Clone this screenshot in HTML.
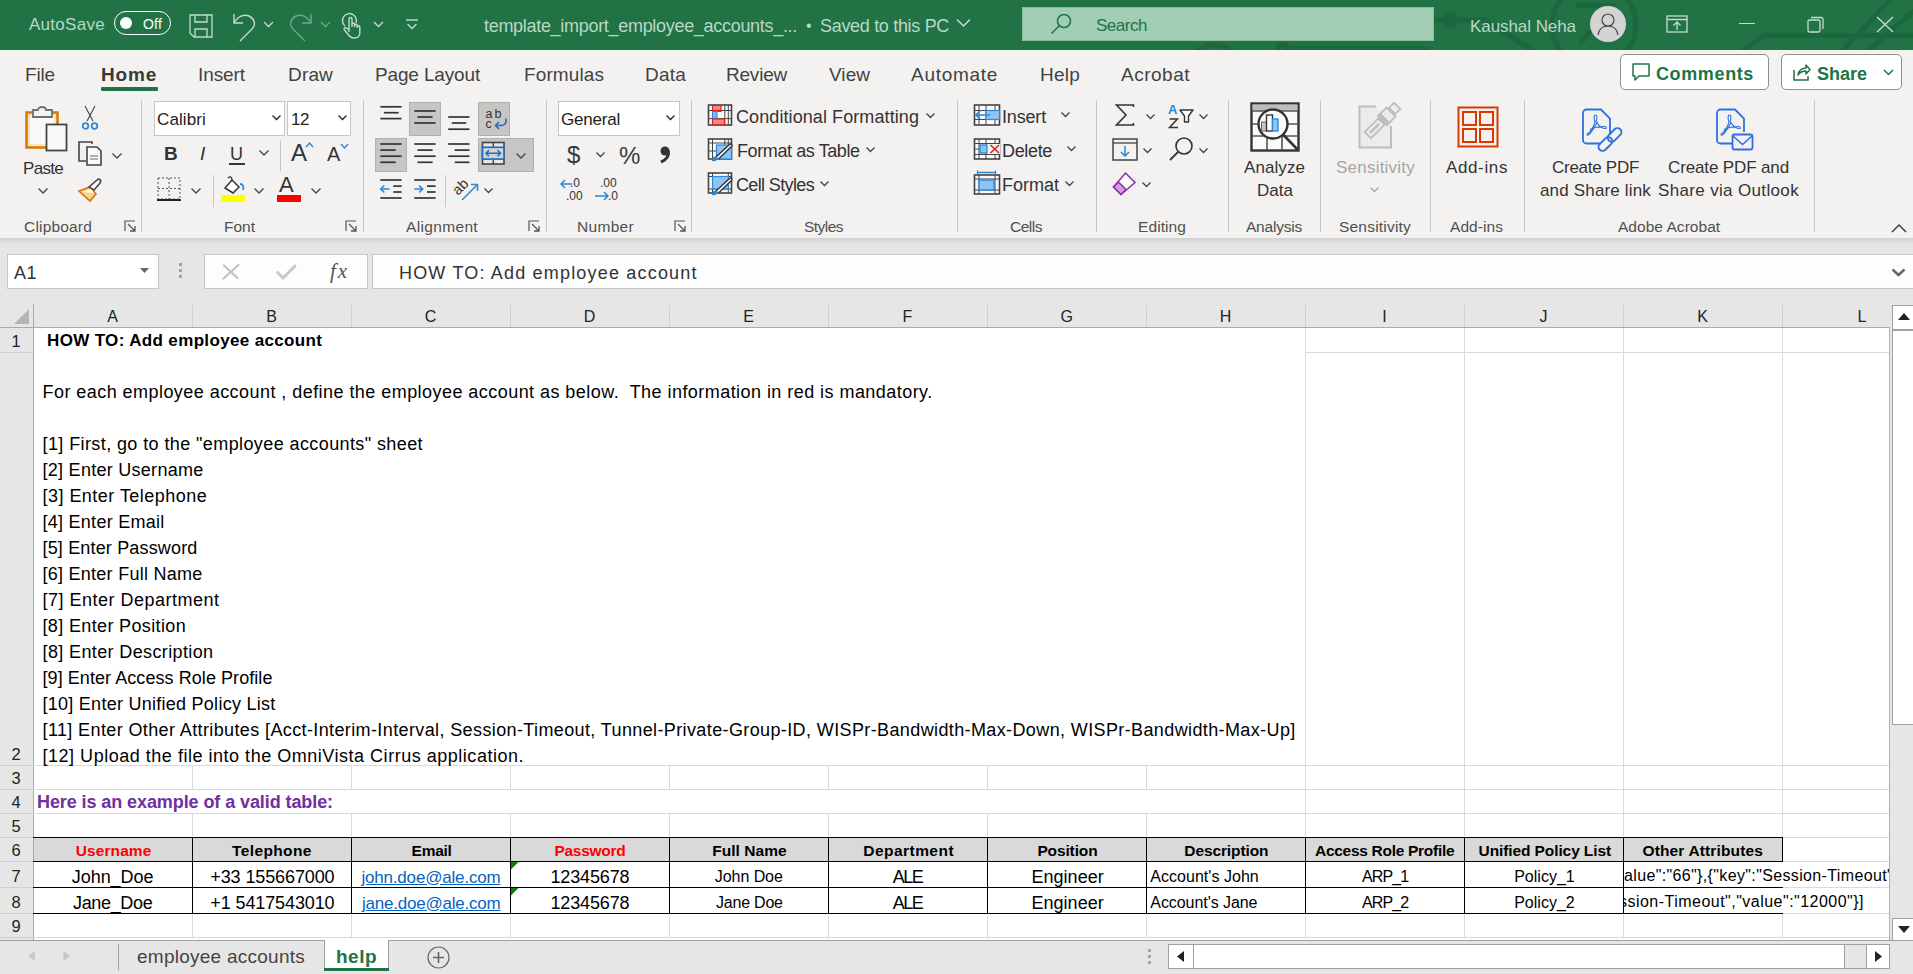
<!DOCTYPE html><html><head><meta charset="utf-8"><style>html,body{margin:0;padding:0}body{width:1913px;height:974px;position:relative;overflow:hidden;background:#fff}body div,body svg{position:absolute;box-sizing:border-box}svg{overflow:visible}</style></head><body><div style="left:0px;top:0px;width:1913px;height:50px;background:#217346"></div>
<div style="left:29px;top:15.61px;font:normal 17px/17px 'Liberation Sans', sans-serif;color:#b9d8c5;letter-spacing:0.285px;white-space:pre;">AutoSave</div>
<div style="left:114px;top:11px;width:57px;height:24px;border:1.5px solid #fff;border-radius:12px"></div>
<div style="left:120px;top:17px;width:12px;height:12px;background:#fff;border-radius:6px"></div>
<div style="left:143px;top:17.15px;font:normal 14px/14px 'Liberation Sans', sans-serif;color:#fff;letter-spacing:0.195px;white-space:pre;">Off</div>
<svg style="left:189px;top:14px" width="25" height="24" viewBox="0 0 25 24"><path d="M1 1H23V23H5L1 19Z M6 1V8H18V1 M6 23V15H18V23" fill="none" stroke="#c3dccd" stroke-width="1.3"/></svg>
<svg style="left:232px;top:13px" width="24" height="26" viewBox="0 0 24 26"><path d="M2 1V10H11" fill="none" stroke="#c3dccd" stroke-width="1.4"/><path d="M2 10C6 3 12 1 17 3C23 6 24 12 20 16L8 28" fill="none" stroke="#c3dccd" stroke-width="1.4"/></svg>
<svg style="left:263px;top:21px" width="11" height="7" viewBox="0 0 11 7"><path d="M1 1L5.5 5.5L10 1" fill="none" stroke="#c3dccd" stroke-width="1.3"/></svg>
<svg style="left:289px;top:13px" width="24" height="26" viewBox="0 0 24 26"><path d="M22 1V10H13" fill="none" stroke="#6fa88a" stroke-width="1.4"/><path d="M22 10C18 3 12 1 7 3C1 6 0 12 4 16L16 28" fill="none" stroke="#6fa88a" stroke-width="1.4"/></svg>
<svg style="left:320px;top:21px" width="11" height="7" viewBox="0 0 11 7"><path d="M1 1L5.5 5.5L10 1" fill="none" stroke="#6fa88a" stroke-width="1.3"/></svg>
<svg style="left:341px;top:13px" width="20" height="26" viewBox="0 0 20 26"><path d="M4 13A7 7 0 1 1 15 10" fill="none" stroke="#c3dccd" stroke-width="1.4"/><path d="M8 19V6A1.5 1.5 0 0 1 11 6V14M11 13V11.5A1.3 1.3 0 0 1 13.6 11.5V14M13.6 12.5A1.3 1.3 0 0 1 16.2 12.5V15M16.2 14A1.3 1.3 0 0 1 18.8 14V20C18.8 24 16 25 13 25C10 25 8 23 6 20L3.5 17A1.4 1.4 0 0 1 5.5 15L8 17" fill="none" stroke="#c3dccd" stroke-width="1.4"/></svg>
<svg style="left:373px;top:21px" width="11" height="7" viewBox="0 0 11 7"><path d="M1 1L5.5 5.5L10 1" fill="none" stroke="#c3dccd" stroke-width="1.3"/></svg>
<svg style="left:406px;top:19px" width="12" height="11" viewBox="0 0 12 11"><path d="M0 1H12" stroke="#c3dccd" stroke-width="1.4"/><path d="M1.5 5L6 9.5L10.5 5" fill="none" stroke="#c3dccd" stroke-width="1.4"/></svg>
<div style="left:484px;top:16.76px;font:normal 18px/18px 'Liberation Sans', sans-serif;color:#b9d8c5;letter-spacing:-0.302px;white-space:pre;">template_import_employee_accounts_...</div>
<div style="left:806px;top:18.46px;font:normal 16px/16px 'Liberation Sans', sans-serif;color:#b9d8c5;letter-spacing:0.398px;white-space:pre;">•</div>
<div style="left:820px;top:16.76px;font:normal 18px/18px 'Liberation Sans', sans-serif;color:#b9d8c5;letter-spacing:-0.317px;white-space:pre;">Saved to this PC</div>
<svg style="left:956px;top:18px" width="15" height="10" viewBox="0 0 15 10"><path d="M1 1.5L7.5 8L14 1.5" fill="none" stroke="#c3dccd" stroke-width="1.5"/></svg>
<svg style="left:0px;top:0px" width="1913" height="50" viewBox="0 0 1913 50"><g fill="none" stroke="#1d673e" stroke-width="5"><circle cx="1594" cy="25" r="42"/><path d="M1576 5.5H1612L1580 44"/><path d="M1434 20H1485L1535 52"/><circle cx="1450" cy="20" r="5.5"/><circle cx="1214" cy="72" r="27"/><circle cx="1283" cy="49" r="5"/><path d="M1283 49H1430"/><path d="M1742 52L1763 35.5H1913"/><path d="M1841 52L1892 -2"/><path d="M1867 52L1915 10"/></g></svg>
<div style="left:1022px;top:7px;width:412px;height:34px;background:#a0cdb4;border:1px solid #88bb9e"></div>
<svg style="left:1050px;top:13px" width="23" height="22" viewBox="0 0 23 22"><circle cx="14" cy="8" r="6.5" fill="none" stroke="#217346" stroke-width="1.5"/><path d="M9.5 12.5L1.5 20.5" stroke="#217346" stroke-width="1.5"/></svg>
<div style="left:1096px;top:16.61px;font:normal 17px/17px 'Liberation Sans', sans-serif;color:#217346;letter-spacing:-0.477px;white-space:pre;">Search</div>
<div style="left:1470px;top:17.61px;font:normal 17px/17px 'Liberation Sans', sans-serif;color:#b9d8c5;letter-spacing:-0.066px;white-space:pre;">Kaushal Neha</div>
<div style="left:1590px;top:6px;width:36px;height:36px;background:#d4d4d4;border-radius:18px"></div>
<svg style="left:1590px;top:6px" width="36" height="36" viewBox="0 0 36 36"><circle cx="18" cy="14" r="6" fill="none" stroke="#444" stroke-width="1.2"/><path d="M8 29C9 22 13 20 18 20C23 20 27 22 28 29" fill="none" stroke="#444" stroke-width="1.2"/></svg>
<svg style="left:1666px;top:15px" width="22" height="18" viewBox="0 0 22 18"><rect x="1" y="1" width="20" height="16" fill="none" stroke="#c3dccd" stroke-width="1.3"/><path d="M1 4.5H21M11 15V7M7.5 10.5L11 7L14.5 10.5" fill="none" stroke="#c3dccd" stroke-width="1.3"/></svg>
<div style="left:1739px;top:23px;width:16px;height:1px;background:#c3dccd"></div>
<svg style="left:1807px;top:16px" width="18" height="17" viewBox="0 0 18 17"><rect x="1" y="4" width="12" height="12" rx="1.5" fill="none" stroke="#c3dccd" stroke-width="1.3"/><path d="M4 1.5H14A2 2 0 0 1 16 3.5V13" fill="none" stroke="#c3dccd" stroke-width="1.3"/></svg>
<svg style="left:1876px;top:16px" width="18" height="17" viewBox="0 0 18 17"><path d="M1 1L17 16M17 1L1 16" stroke="#c3dccd" stroke-width="1.4"/></svg>
<div style="left:0px;top:50px;width:1913px;height:188px;background:#f3f2f1"></div>
<div style="left:0px;top:238px;width:1913px;height:6px;background:linear-gradient(#d0d0d0,#e6e6e6)"></div>
<div style="left:25px;top:64.92px;font:normal 19px/19px 'Liberation Sans', sans-serif;color:#424242;letter-spacing:-0.154px;white-space:pre;">File</div>
<div style="left:101px;top:64.92px;font:bold 19px/19px 'Liberation Sans', sans-serif;color:#3a3a3a;letter-spacing:0.803px;white-space:pre;">Home</div>
<div style="left:198px;top:64.92px;font:normal 19px/19px 'Liberation Sans', sans-serif;color:#424242;letter-spacing:-0.086px;white-space:pre;">Insert</div>
<div style="left:288px;top:64.92px;font:normal 19px/19px 'Liberation Sans', sans-serif;color:#424242;letter-spacing:0.166px;white-space:pre;">Draw</div>
<div style="left:375px;top:64.92px;font:normal 19px/19px 'Liberation Sans', sans-serif;color:#424242;letter-spacing:-0.154px;white-space:pre;">Page Layout</div>
<div style="left:524px;top:64.92px;font:normal 19px/19px 'Liberation Sans', sans-serif;color:#424242;letter-spacing:0.102px;white-space:pre;">Formulas</div>
<div style="left:645px;top:64.92px;font:normal 19px/19px 'Liberation Sans', sans-serif;color:#424242;letter-spacing:0.217px;white-space:pre;">Data</div>
<div style="left:726px;top:64.92px;font:normal 19px/19px 'Liberation Sans', sans-serif;color:#424242;letter-spacing:-0.216px;white-space:pre;">Review</div>
<div style="left:829px;top:64.92px;font:normal 19px/19px 'Liberation Sans', sans-serif;color:#424242;letter-spacing:0.040px;white-space:pre;">View</div>
<div style="left:911px;top:64.92px;font:normal 19px/19px 'Liberation Sans', sans-serif;color:#424242;letter-spacing:0.709px;white-space:pre;">Automate</div>
<div style="left:1040px;top:64.92px;font:normal 19px/19px 'Liberation Sans', sans-serif;color:#424242;letter-spacing:0.231px;white-space:pre;">Help</div>
<div style="left:1121px;top:64.92px;font:normal 19px/19px 'Liberation Sans', sans-serif;color:#424242;letter-spacing:0.503px;white-space:pre;">Acrobat</div>
<div style="left:101px;top:87px;width:57px;height:4px;background:#217346;border-radius:1px"></div>
<div style="left:1620px;top:54px;width:149px;height:36px;background:#fff;border:1px solid #8f8f8f;border-radius:5px"></div>
<svg style="left:1631px;top:62px" width="20" height="20" viewBox="0 0 20 20"><path d="M2 2H18V14H8L4 18V14H2Z" fill="none" stroke="#217346" stroke-width="1.5" stroke-linejoin="round"/></svg>
<div style="left:1656px;top:64.76px;font:bold 18px/18px 'Liberation Sans', sans-serif;color:#217346;letter-spacing:0.623px;white-space:pre;">Comments</div>
<div style="left:1781px;top:54px;width:121px;height:36px;background:#fff;border:1px solid #8f8f8f;border-radius:5px"></div>
<svg style="left:1791px;top:62px" width="20" height="20" viewBox="0 0 20 20"><path d="M3 8V18H17V14" fill="none" stroke="#217346" stroke-width="1.5"/><path d="M7 13C8 8 11 6 15 6V3L19 7.5L15 12V9C11 9 9 10 7 13Z" fill="none" stroke="#217346" stroke-width="1.5" stroke-linejoin="round"/></svg>
<div style="left:1817px;top:64.76px;font:bold 18px/18px 'Liberation Sans', sans-serif;color:#217346;letter-spacing:-0.005px;white-space:pre;">Share</div>
<svg style="left:1883px;top:69px" width="11" height="7" viewBox="0 0 11 7"><path d="M1 1L5.5 5.5L10 1" fill="none" stroke="#217346" stroke-width="1.5"/></svg>
<div style="left:141px;top:100px;width:1px;height:132px;background:#c8c6c4"></div>
<div style="left:363px;top:100px;width:1px;height:132px;background:#c8c6c4"></div>
<div style="left:546px;top:100px;width:1px;height:132px;background:#c8c6c4"></div>
<div style="left:691px;top:100px;width:1px;height:132px;background:#c8c6c4"></div>
<div style="left:957px;top:100px;width:1px;height:132px;background:#c8c6c4"></div>
<div style="left:1096px;top:100px;width:1px;height:132px;background:#c8c6c4"></div>
<div style="left:1228px;top:100px;width:1px;height:132px;background:#c8c6c4"></div>
<div style="left:1320px;top:100px;width:1px;height:132px;background:#c8c6c4"></div>
<div style="left:1430px;top:100px;width:1px;height:132px;background:#c8c6c4"></div>
<div style="left:1524px;top:100px;width:1px;height:132px;background:#c8c6c4"></div>
<div style="left:1814px;top:100px;width:1px;height:132px;background:#c8c6c4"></div>
<div style="left:24px;top:218.88px;font:normal 15.5px/15.5px 'Liberation Sans', sans-serif;color:#505050;letter-spacing:0.184px;white-space:pre;">Clipboard</div>
<div style="left:224px;top:218.88px;font:normal 15.5px/15.5px 'Liberation Sans', sans-serif;color:#505050;letter-spacing:-0.004px;white-space:pre;">Font</div>
<div style="left:406px;top:218.88px;font:normal 15.5px/15.5px 'Liberation Sans', sans-serif;color:#505050;letter-spacing:0.342px;white-space:pre;">Alignment</div>
<div style="left:577px;top:218.88px;font:normal 15.5px/15.5px 'Liberation Sans', sans-serif;color:#505050;letter-spacing:0.312px;white-space:pre;">Number</div>
<div style="left:804px;top:218.88px;font:normal 15.5px/15.5px 'Liberation Sans', sans-serif;color:#505050;letter-spacing:-0.535px;white-space:pre;">Styles</div>
<div style="left:1010px;top:218.88px;font:normal 15.5px/15.5px 'Liberation Sans', sans-serif;color:#505050;letter-spacing:-0.490px;white-space:pre;">Cells</div>
<div style="left:1138px;top:218.88px;font:normal 15.5px/15.5px 'Liberation Sans', sans-serif;color:#505050;letter-spacing:0.087px;white-space:pre;">Editing</div>
<div style="left:1246px;top:218.88px;font:normal 15.5px/15.5px 'Liberation Sans', sans-serif;color:#505050;letter-spacing:-0.215px;white-space:pre;">Analysis</div>
<div style="left:1339px;top:218.88px;font:normal 15.5px/15.5px 'Liberation Sans', sans-serif;color:#505050;letter-spacing:0.202px;white-space:pre;">Sensitivity</div>
<div style="left:1450px;top:218.88px;font:normal 15.5px/15.5px 'Liberation Sans', sans-serif;color:#505050;letter-spacing:0.064px;white-space:pre;">Add-ins</div>
<div style="left:1618px;top:218.88px;font:normal 15.5px/15.5px 'Liberation Sans', sans-serif;color:#505050;letter-spacing:0.035px;white-space:pre;">Adobe Acrobat</div>
<svg style="left:124px;top:220px" width="12" height="12" viewBox="0 0 12 12"><path d="M1 11V1H11" fill="none" stroke="#555" stroke-width="1.2"/><path d="M4 4L11 11M6 11H11V6" fill="none" stroke="#555" stroke-width="1.3"/></svg>
<svg style="left:345px;top:220px" width="12" height="12" viewBox="0 0 12 12"><path d="M1 11V1H11" fill="none" stroke="#555" stroke-width="1.2"/><path d="M4 4L11 11M6 11H11V6" fill="none" stroke="#555" stroke-width="1.3"/></svg>
<svg style="left:528px;top:220px" width="12" height="12" viewBox="0 0 12 12"><path d="M1 11V1H11" fill="none" stroke="#555" stroke-width="1.2"/><path d="M4 4L11 11M6 11H11V6" fill="none" stroke="#555" stroke-width="1.3"/></svg>
<svg style="left:674px;top:220px" width="12" height="12" viewBox="0 0 12 12"><path d="M1 11V1H11" fill="none" stroke="#555" stroke-width="1.2"/><path d="M4 4L11 11M6 11H11V6" fill="none" stroke="#555" stroke-width="1.3"/></svg>
<svg style="left:25px;top:105px" width="44" height="47" viewBox="0 0 44 47"><rect x="1.5" y="7.5" width="31" height="35" fill="#fbe5b6" stroke="#d97706" stroke-width="2.5"/><rect x="5" y="11" width="24" height="28" fill="#f8f8f8"/><path d="M8 12V5H13C13 1 21 1 21 5H27V12Z" fill="#f3f3f3" stroke="#707070" stroke-width="1.8"/><rect x="21.5" y="19.5" width="20" height="26" fill="#fafafa" stroke="#444" stroke-width="1.8"/></svg>
<div style="left:23px;top:159.61px;font:normal 17px/17px 'Liberation Sans', sans-serif;color:#333;letter-spacing:-0.694px;white-space:pre;">Paste</div>
<svg style="left:38px;top:188px" width="10" height="6.5" viewBox="0 0 10 6.5"><path d="M0.5 0.5L5.0 5.0L9.5 0.5" fill="none" stroke="#444" stroke-width="1.3"/></svg>
<svg style="left:81px;top:105px" width="18" height="26" viewBox="0 0 18 26"><path d="M4 1L12 16M14 1L6 16" stroke="#444" stroke-width="1.1" fill="none"/><circle cx="4.5" cy="21" r="2.8" fill="none" stroke="#2b88d8" stroke-width="1.8"/><circle cx="13.5" cy="21" r="2.8" fill="none" stroke="#2b88d8" stroke-width="1.8"/></svg>
<svg style="left:77px;top:141px" width="26" height="26" viewBox="0 0 26 26"><path d="M15 3V1H2V20H9" fill="none" stroke="#444" stroke-width="1.6"/><path d="M10 6H20L24 10V24H10Z" fill="#fafafa" stroke="#444" stroke-width="1.6"/><path d="M13 15H21M13 18H21" stroke="#666" stroke-width="1"/></svg>
<svg style="left:112px;top:153px" width="10" height="6.5" viewBox="0 0 10 6.5"><path d="M0.5 0.5L5.0 5.0L9.5 0.5" fill="none" stroke="#444" stroke-width="1.3"/></svg>
<svg style="left:77px;top:177px" width="26" height="25" viewBox="0 0 26 25"><path d="M2 14L13 10L19 17L13 24Z" fill="#fbd38d" stroke="#d97706" stroke-width="1.6"/><path d="M6 15L14 12L17 16" fill="#fff"/><path d="M12 10L20 3C22 1 25 3 23 6L17 13Z" fill="#fff" stroke="#444" stroke-width="1.6"/></svg>
<div style="left:154px;top:101px;width:131px;height:35px;background:#fff;border:1px solid #c8c6c4"></div>
<div style="left:157px;top:110.61px;font:normal 17px/17px 'Liberation Sans', sans-serif;color:#222;letter-spacing:0.117px;white-space:pre;">Calibri</div>
<svg style="left:272px;top:115px" width="9" height="6.0" viewBox="0 0 9 6.0"><path d="M0.5 0.5L4.5 4.5L8.5 0.5" fill="none" stroke="#222" stroke-width="1.3"/></svg>
<div style="left:287px;top:101px;width:64px;height:35px;background:#fff;border:1px solid #c8c6c4"></div>
<div style="left:291px;top:110.61px;font:normal 17px/17px 'Liberation Sans', sans-serif;color:#222;letter-spacing:-0.455px;white-space:pre;">12</div>
<svg style="left:338px;top:115px" width="9" height="6.0" viewBox="0 0 9 6.0"><path d="M0.5 0.5L4.5 4.5L8.5 0.5" fill="none" stroke="#222" stroke-width="1.3"/></svg>
<div style="left:164px;top:143.92px;font:bold 19px/19px 'Liberation Sans', sans-serif;color:#333;letter-spacing:-1.721px;white-space:pre;">B</div>
<div style="left:200px;top:143.92px;font:italic normal 19px/19px 'Liberation Sans', sans-serif;color:#333;letter-spacing:2.721px;white-space:pre;">I</div>
<div style="left:230px;top:144.76px;font:normal 18px/18px 'Liberation Sans', sans-serif;color:#333;letter-spacing:1.001px;white-space:pre;">U</div>
<div style="left:229px;top:163px;width:16px;height:1.5px;background:#333"></div>
<svg style="left:259px;top:150px" width="10" height="6.5" viewBox="0 0 10 6.5"><path d="M0.5 0.5L5.0 5.0L9.5 0.5" fill="none" stroke="#444" stroke-width="1.3"/></svg>
<div style="left:280px;top:140px;width:1px;height:31px;background:#c8c6c4"></div>
<div style="left:291px;top:140.68px;font:normal 24px/24px 'Liberation Sans', sans-serif;color:#333;letter-spacing:-0.008px;white-space:pre;">A</div>
<svg style="left:305px;top:142px" width="9" height="6" viewBox="0 0 9 6"><path d="M1 5L4.5 1L8 5" fill="none" stroke="#2b88d8" stroke-width="1.4"/></svg>
<div style="left:327px;top:144.07px;font:normal 20px/20px 'Liberation Sans', sans-serif;color:#333;letter-spacing:1.660px;white-space:pre;">A</div>
<svg style="left:340px;top:143px" width="9" height="6" viewBox="0 0 9 6"><path d="M1 1L4.5 5L8 1" fill="none" stroke="#2b88d8" stroke-width="1.4"/></svg>
<svg style="left:157px;top:177px" width="24" height="24" viewBox="0 0 24 24"><path d="M1 1H23V22H1Z M12 1V22 M1 11.5H23" fill="none" stroke="#555" stroke-width="1" stroke-dasharray="2 2"/><path d="M0 23H24" stroke="#222" stroke-width="2"/></svg>
<svg style="left:191px;top:188px" width="10" height="6.5" viewBox="0 0 10 6.5"><path d="M0.5 0.5L5.0 5.0L9.5 0.5" fill="none" stroke="#444" stroke-width="1.3"/></svg>
<div style="left:213px;top:175px;width:1px;height:32px;background:#c8c6c4"></div>
<svg style="left:220px;top:176px" width="27" height="20" viewBox="0 0 27 20"><path d="M5 12L12 4L19 11L13 17Z" fill="#fff" stroke="#333" stroke-width="1.5"/><path d="M8 2C10 0 12 1 12 4" fill="none" stroke="#333" stroke-width="1.3"/><path d="M20 8C23 8 24 11 23 14" fill="none" stroke="#2b88d8" stroke-width="1.8"/></svg>
<div style="left:221px;top:195px;width:24px;height:7px;background:#ffff00"></div>
<svg style="left:254px;top:188px" width="10" height="6.5" viewBox="0 0 10 6.5"><path d="M0.5 0.5L5.0 5.0L9.5 0.5" fill="none" stroke="#444" stroke-width="1.3"/></svg>
<div style="left:279px;top:174.38px;font:normal 22px/22px 'Liberation Sans', sans-serif;color:#333;letter-spacing:5.326px;white-space:pre;">A</div>
<div style="left:277px;top:195px;width:24px;height:7px;background:#ff0000"></div>
<svg style="left:311px;top:188px" width="10" height="6.5" viewBox="0 0 10 6.5"><path d="M0.5 0.5L5.0 5.0L9.5 0.5" fill="none" stroke="#444" stroke-width="1.3"/></svg>
<div style="left:409px;top:102px;width:32px;height:34px;background:#c8c6c4;border:1px solid #b3b0ad"></div>
<div style="left:478px;top:102px;width:32px;height:34px;background:#c8c6c4;border:1px solid #b3b0ad"></div>
<div style="left:375px;top:138px;width:32px;height:34px;background:#c8c6c4;border:1px solid #b3b0ad"></div>
<div style="left:478px;top:138px;width:56px;height:34px;background:#c8c6c4;border:1px solid #b3b0ad"></div>
<svg style="left:0px;top:0px" width="1913" height="974" viewBox="0 0 1913 974"><path d="M380.3 106.8H401.6" stroke="#333" stroke-width="1.7"/><path d="M383.9 112.7H398.6" stroke="#333" stroke-width="1.7"/><path d="M380.3 118.6H401.6" stroke="#333" stroke-width="1.7"/><path d="M414.3 111H435.6" stroke="#333" stroke-width="1.7"/><path d="M417.5 117H432.6" stroke="#333" stroke-width="1.7"/><path d="M414.3 123H435.6" stroke="#333" stroke-width="1.7"/><path d="M448.2 117H469.5" stroke="#333" stroke-width="1.7"/><path d="M451.8 123H466.3" stroke="#333" stroke-width="1.7"/><path d="M448.2 129.2H469.5" stroke="#333" stroke-width="1.7"/><path d="M380.3 144H401.6" stroke="#333" stroke-width="1.7"/><path d="M380.3 150.1H395.7" stroke="#333" stroke-width="1.7"/><path d="M380.3 156.2H401.6" stroke="#333" stroke-width="1.7"/><path d="M380.3 162.3H395.7" stroke="#333" stroke-width="1.7"/><path d="M414.3 144H435.6" stroke="#333" stroke-width="1.7"/><path d="M417.5 150.1H432.6" stroke="#333" stroke-width="1.7"/><path d="M414.3 156.2H435.6" stroke="#333" stroke-width="1.7"/><path d="M417.5 162.3H432.6" stroke="#333" stroke-width="1.7"/><path d="M448.2 144H469.5" stroke="#333" stroke-width="1.7"/><path d="M454.7 150.1H469.5" stroke="#333" stroke-width="1.7"/><path d="M448.2 156.2H469.5" stroke="#333" stroke-width="1.7"/><path d="M454.7 162.3H469.5" stroke="#333" stroke-width="1.7"/><path d="M380.3 180H401.6" stroke="#333" stroke-width="1.7"/><path d="M393.3 186.1H401.6" stroke="#333" stroke-width="1.7"/><path d="M393.3 192H401.6" stroke="#333" stroke-width="1.7"/><path d="M380.3 198H401.6" stroke="#333" stroke-width="1.7"/><path d="M380.8 189H389.5M384.3 185.5L380.8 189L384.3 192.5" fill="none" stroke="#2b88d8" stroke-width="1.7"/><path d="M414.3 180H435.6" stroke="#333" stroke-width="1.7"/><path d="M427 186.1H435.6" stroke="#333" stroke-width="1.7"/><path d="M427 192H435.6" stroke="#333" stroke-width="1.7"/><path d="M414.3 198H435.6" stroke="#333" stroke-width="1.7"/><path d="M414.3 189H422.6M419.1 185.5L422.6 189L419.1 192.5" fill="none" stroke="#2b88d8" stroke-width="1.7"/><text x="485.5" y="117.5" font-family="Liberation Sans" font-size="12.5" fill="#333" textLength="16">ab</text><text x="485.5" y="128" font-family="Liberation Sans" font-size="12.5" fill="#333">c</text><path d="M505.5 118.5C507 121 506 125 502 125.5H495.5M499 122L495.5 125.5L499 129" fill="none" stroke="#1f6fc0" stroke-width="1.7"/><rect x="482.5" y="142.5" width="21.5" height="21.5" fill="#e8e8e8" stroke="#444" stroke-width="1.6"/><path d="M493.3 142.5V164" stroke="#444" stroke-width="1.4"/><rect x="482.5" y="147.3" width="21.5" height="11.8" fill="#d4d4d4" stroke="#1f6fc0" stroke-width="1.7"/><path d="M486 153.2H500.5M489 150.2L486 153.2L489 156.2M497.5 150.2L500.5 153.2L497.5 156.2" fill="none" stroke="#1f6fc0" stroke-width="1.6"/><text x="0" y="0" font-family="Liberation Sans" font-size="14.5" fill="#333" transform="translate(458 196) rotate(-45)">ab</text><path d="M462 200L477.5 184.5M471 184.5H477.5V191" fill="none" stroke="#2b88d8" stroke-width="1.5"/></svg>
<svg style="left:516px;top:153px" width="10" height="6.5" viewBox="0 0 10 6.5"><path d="M0.5 0.5L5.0 5.0L9.5 0.5" fill="none" stroke="#444" stroke-width="1.3"/></svg>
<div style="left:445px;top:175px;width:1px;height:32px;background:#c8c6c4"></div>
<svg style="left:484px;top:188px" width="9" height="6.0" viewBox="0 0 9 6.0"><path d="M0.5 0.5L4.5 4.5L8.5 0.5" fill="none" stroke="#444" stroke-width="1.3"/></svg>
<div style="left:558px;top:101px;width:122px;height:35px;background:#fff;border:1px solid #c8c6c4"></div>
<div style="left:561px;top:110.61px;font:normal 17px/17px 'Liberation Sans', sans-serif;color:#222;letter-spacing:-0.211px;white-space:pre;">General</div>
<svg style="left:666px;top:115px" width="9" height="6.0" viewBox="0 0 9 6.0"><path d="M0.5 0.5L4.5 4.5L8.5 0.5" fill="none" stroke="#222" stroke-width="1.3"/></svg>
<div style="left:567px;top:143.18px;font:normal 24px/24px 'Liberation Sans', sans-serif;color:#3a3a3a;letter-spacing:-0.348px;white-space:pre;">$</div>
<svg style="left:596px;top:152px" width="9" height="6.0" viewBox="0 0 9 6.0"><path d="M0.5 0.5L4.5 4.5L8.5 0.5" fill="none" stroke="#444" stroke-width="1.3"/></svg>
<div style="left:619px;top:144.18px;font:normal 24px/24px 'Liberation Sans', sans-serif;color:#3a3a3a;letter-spacing:0.660px;white-space:pre;">%</div>
<svg style="left:657px;top:145px" width="15" height="19" viewBox="0 0 15 19"><circle cx="8" cy="6" r="4.5" fill="#333"/><path d="M11.5 6C12 11 9 15 4 17" fill="none" stroke="#333" stroke-width="3"/></svg>
<svg style="left:560px;top:176px" width="28" height="26" viewBox="0 0 28 26"><text x="10" y="11" font-family="Liberation Sans" font-size="12" fill="#333">.0</text><text x="6" y="24" font-family="Liberation Sans" font-size="12" fill="#333">.00</text><path d="M1 8H12M5 4L1 8L5 12" fill="none" stroke="#2b88d8" stroke-width="1.5"/></svg>
<svg style="left:594px;top:176px" width="28" height="26" viewBox="0 0 28 26"><text x="6" y="11" font-family="Liberation Sans" font-size="12" fill="#333">.00</text><text x="14" y="24" font-family="Liberation Sans" font-size="12" fill="#333">.0</text><path d="M1 20H14M10 16L14 20L10 24" fill="none" stroke="#2b88d8" stroke-width="1.5"/></svg>
<svg style="left:0px;top:0px" width="1913" height="974" viewBox="0 0 1913 974"><rect x="708.5" y="105" width="23.0" height="20" fill="#fafafa" stroke="#444" stroke-width="1.6"/><path d="M712.5 105V125" stroke="#444" stroke-width="1"/><path d="M724.8 105V125" stroke="#444" stroke-width="1"/><path d="M728.3 105V125" stroke="#444" stroke-width="1"/><path d="M708.5 110.5H731.5" stroke="#444" stroke-width="1"/><path d="M708.5 118.6H731.5" stroke="#444" stroke-width="1"/><rect x="712.5" y="105.5" width="8.5" height="5" fill="#f28b8b" stroke="#e02020" stroke-width="1.2"/><rect x="712.5" y="111.5" width="4.5" height="7" fill="#7ab8f0" stroke="#2b88d8" stroke-width="1"/><rect x="712.5" y="119" width="12" height="5.8" fill="#f28b8b" stroke="#e02020" stroke-width="1.2"/><path d="M721 110.5V111.5H717.5" fill="none" stroke="#e02020" stroke-width="1.2"/><rect x="708.5" y="139" width="23.0" height="20" fill="#fafafa" stroke="#444" stroke-width="1.6"/><path d="M712.5 139V159" stroke="#444" stroke-width="1"/><path d="M724.8 139V159" stroke="#444" stroke-width="1"/><path d="M728.3 139V159" stroke="#444" stroke-width="1"/><path d="M708.5 143H731.5" stroke="#444" stroke-width="1"/><path d="M708.5 151H731.5" stroke="#444" stroke-width="1"/><rect x="716.5" y="145" width="15" height="14" fill="#8cc4f6" stroke="#2b88d8" stroke-width="1.2"/><path d="M716 157L729.5 144.5C731 143 733 145 731.5 146.5L718.5 159" fill="#fafafa" stroke="#333" stroke-width="1.4"/><path d="M712 161C712 157 715 155 717.5 157.5C718.5 160 715 162 712 161Z" fill="#2b88d8"/><rect x="708.5" y="173" width="23.0" height="20" fill="#fafafa" stroke="#444" stroke-width="1.6"/><path d="M712.5 173V193" stroke="#444" stroke-width="1"/><path d="M728.3 173V193" stroke="#444" stroke-width="1"/><path d="M708.5 176.5H731.5" stroke="#444" stroke-width="1"/><path d="M708.5 189H731.5" stroke="#444" stroke-width="1"/><rect x="712.5" y="176.5" width="15.8" height="12.5" fill="#8cc4f6" stroke="#2b88d8" stroke-width="1.2"/><path d="M716 191L729.5 178.5C731 177 733 179 731.5 180.5L718.5 193" fill="#fafafa" stroke="#333" stroke-width="1.4"/><path d="M712 195C712 191 715 189 717.5 191.5C718.5 194 715 196 712 195Z" fill="#2b88d8"/><rect x="974.5" y="105" width="25.0" height="20" fill="#fafafa" stroke="#444" stroke-width="1.6"/><path d="M979 105V125" stroke="#444" stroke-width="1"/><path d="M986 105V125" stroke="#444" stroke-width="1"/><path d="M995 105V125" stroke="#444" stroke-width="1"/><path d="M974.5 110.5H999.5" stroke="#444" stroke-width="1"/><path d="M974.5 119.5H999.5" stroke="#444" stroke-width="1"/><rect x="986" y="110.5" width="13.5" height="9" fill="#8cc4f6" stroke="#2b88d8" stroke-width="1.2"/><path d="M976 115H990M980 111L976 115L980 119" fill="none" stroke="#2b88d8" stroke-width="1.6"/><rect x="974.5" y="139" width="25.0" height="20" fill="#fafafa" stroke="#444" stroke-width="1.6"/><path d="M979 139V159" stroke="#444" stroke-width="1"/><path d="M986 139V159" stroke="#444" stroke-width="1"/><path d="M995 139V159" stroke="#444" stroke-width="1"/><path d="M974.5 143.5H999.5" stroke="#444" stroke-width="1"/><path d="M974.5 154.5H999.5" stroke="#444" stroke-width="1"/><rect x="980" y="145" width="7" height="8" fill="#8cc4f6" stroke="#2b88d8" stroke-width="1.3"/><path d="M975 149H980" stroke="#2b88d8" stroke-width="1.3"/><rect x="989" y="144" width="11" height="10" fill="#f3f2f1"/><path d="M990.5 145L999 153M999 145L990.5 153" stroke="#e02020" stroke-width="1.6"/><rect x="974.5" y="175" width="25.0" height="19" fill="#fafafa" stroke="#444" stroke-width="1.6"/><path d="M979 175V194" stroke="#444" stroke-width="1"/><path d="M995 175V194" stroke="#444" stroke-width="1"/><path d="M974.5 179H999.5" stroke="#444" stroke-width="1"/><path d="M974.5 190H999.5" stroke="#444" stroke-width="1"/><rect x="979" y="180" width="15" height="10" fill="#8cc4f6" stroke="#2b88d8" stroke-width="1.3"/><path d="M977.5 172.5H995.5M977.5 170.5V174.5M995.5 170.5V174.5" fill="none" stroke="#2b88d8" stroke-width="1.3"/></svg>
<div style="left:736px;top:108.26px;font:normal 18px/18px 'Liberation Sans', sans-serif;color:#333;letter-spacing:0.087px;white-space:pre;">Conditional Formatting</div>
<svg style="left:926px;top:113px" width="9" height="6.0" viewBox="0 0 9 6.0"><path d="M0.5 0.5L4.5 4.5L8.5 0.5" fill="none" stroke="#444" stroke-width="1.3"/></svg>
<div style="left:737px;top:142.26px;font:normal 18px/18px 'Liberation Sans', sans-serif;color:#333;letter-spacing:-0.403px;white-space:pre;">Format as Table</div>
<svg style="left:866px;top:147px" width="9" height="6.0" viewBox="0 0 9 6.0"><path d="M0.5 0.5L4.5 4.5L8.5 0.5" fill="none" stroke="#444" stroke-width="1.3"/></svg>
<div style="left:736px;top:176.26px;font:normal 18px/18px 'Liberation Sans', sans-serif;color:#333;letter-spacing:-0.639px;white-space:pre;">Cell Styles</div>
<svg style="left:820px;top:181px" width="9" height="6.0" viewBox="0 0 9 6.0"><path d="M0.5 0.5L4.5 4.5L8.5 0.5" fill="none" stroke="#444" stroke-width="1.3"/></svg>
<div style="left:1002px;top:108.26px;font:normal 18px/18px 'Liberation Sans', sans-serif;color:#333;letter-spacing:-0.170px;white-space:pre;">Insert</div>
<svg style="left:1061px;top:112px" width="9" height="6.0" viewBox="0 0 9 6.0"><path d="M0.5 0.5L4.5 4.5L8.5 0.5" fill="none" stroke="#444" stroke-width="1.3"/></svg>
<div style="left:1002px;top:142.26px;font:normal 18px/18px 'Liberation Sans', sans-serif;color:#333;letter-spacing:-0.339px;white-space:pre;">Delete</div>
<svg style="left:1067px;top:146px" width="9" height="6.0" viewBox="0 0 9 6.0"><path d="M0.5 0.5L4.5 4.5L8.5 0.5" fill="none" stroke="#444" stroke-width="1.3"/></svg>
<div style="left:1002px;top:176.26px;font:normal 18px/18px 'Liberation Sans', sans-serif;color:#333;letter-spacing:-0.001px;white-space:pre;">Format</div>
<svg style="left:1065px;top:181px" width="9" height="6.0" viewBox="0 0 9 6.0"><path d="M0.5 0.5L4.5 4.5L8.5 0.5" fill="none" stroke="#444" stroke-width="1.3"/></svg>
<svg style="left:1114px;top:103px" width="22" height="24" viewBox="0 0 22 24"><path d="M19.5 4V2H2.5L12 12L2.5 22H19.5V20" fill="none" stroke="#333" stroke-width="1.6" stroke-linejoin="miter"/></svg>
<svg style="left:1146px;top:114px" width="9" height="6.0" viewBox="0 0 9 6.0"><path d="M0.5 0.5L4.5 4.5L8.5 0.5" fill="none" stroke="#444" stroke-width="1.3"/></svg>
<svg style="left:1167px;top:102px" width="28" height="27" viewBox="0 0 28 27"><text x="1" y="12" font-family="Liberation Sans" font-weight="bold" font-size="13" fill="#2b88d8">A</text><path d="M2.5 17H10.5L2.5 25.5H11" fill="none" stroke="#333" stroke-width="1.5"/><path d="M13 8H26L21.5 14V20H17.5V14Z" fill="#fafafa" stroke="#333" stroke-width="1.4" stroke-linejoin="round"/></svg>
<svg style="left:1199px;top:114px" width="9" height="6.0" viewBox="0 0 9 6.0"><path d="M0.5 0.5L4.5 4.5L8.5 0.5" fill="none" stroke="#444" stroke-width="1.3"/></svg>
<svg style="left:1112px;top:138px" width="26" height="23" viewBox="0 0 26 23"><rect x="1" y="1" width="24" height="21" fill="none" stroke="#444" stroke-width="1.5"/><path d="M1 5H25" stroke="#444" stroke-width="1.3"/><path d="M13 8V18M9 14L13 18L17 14" fill="none" stroke="#2b88d8" stroke-width="1.5"/></svg>
<svg style="left:1143px;top:148px" width="9" height="6.0" viewBox="0 0 9 6.0"><path d="M0.5 0.5L4.5 4.5L8.5 0.5" fill="none" stroke="#444" stroke-width="1.3"/></svg>
<svg style="left:1169px;top:136px" width="25" height="25" viewBox="0 0 25 25"><circle cx="15" cy="10" r="8" fill="none" stroke="#333" stroke-width="1.6"/><path d="M9 16L1 24" stroke="#333" stroke-width="1.8"/></svg>
<svg style="left:1199px;top:148px" width="9" height="6.0" viewBox="0 0 9 6.0"><path d="M0.5 0.5L4.5 4.5L8.5 0.5" fill="none" stroke="#444" stroke-width="1.3"/></svg>
<svg style="left:1112px;top:171px" width="25" height="24" viewBox="0 0 25 24"><path d="M13.5 2L23 11.5L9 23.5L1.5 16Z" fill="#fafafa" stroke="#8b2fa8" stroke-width="1.5" stroke-linejoin="miter"/><path d="M6.5 11L14 18.5L9 23.5L1.5 16Z" fill="#d79ae0" stroke="#8b2fa8" stroke-width="1.5"/></svg>
<svg style="left:1142px;top:182px" width="9" height="6.0" viewBox="0 0 9 6.0"><path d="M0.5 0.5L4.5 4.5L8.5 0.5" fill="none" stroke="#444" stroke-width="1.3"/></svg>
<svg style="left:1250px;top:102px" width="50" height="50" viewBox="0 0 50 50"><rect x="1.5" y="1.5" width="47" height="47" fill="#fafafa" stroke="#333" stroke-width="2.4"/><rect x="2.5" y="2.5" width="45" height="6" fill="#bdbdbd"/><path d="M2 9H48M2 22H48M2 34H48M17 34V48M32 34V48" stroke="#555" stroke-width="1.6"/><circle cx="23" cy="22" r="14.5" fill="#fafafa" stroke="#333" stroke-width="2.4"/><path d="M33 32.5L48 48" stroke="#333" stroke-width="2.6"/><rect x="11.5" y="20" width="5" height="9" fill="#c4c4c4" stroke="#666" stroke-width="1"/><rect x="16.5" y="13" width="6" height="16" fill="#fff" stroke="#333" stroke-width="1.4"/><rect x="22.5" y="17" width="5.5" height="12" fill="#8cc4f6" stroke="#2b88d8" stroke-width="1.3"/></svg>
<div style="left:1244px;top:158.61px;font:normal 17px/17px 'Liberation Sans', sans-serif;color:#333;letter-spacing:0.074px;white-space:pre;">Analyze</div>
<div style="left:1257px;top:182.11px;font:normal 17px/17px 'Liberation Sans', sans-serif;color:#333;letter-spacing:0.023px;white-space:pre;">Data</div>
<svg style="left:1356px;top:100px" width="48" height="50" viewBox="0 0 48 50"><path d="M3.5 6.5H20L35 21V47.5H3.5Z" fill="#ececec"/><path d="M20 6.5H3.5V47.5H35V26" fill="none" stroke="#bdbdbd" stroke-width="2"/><g transform="translate(26.5 20.5) rotate(45) scale(0.8)" fill="#ececec" stroke="#bdbdbd" stroke-width="2.2"><rect x="-5.5" y="-26" width="11" height="9"/><rect x="-8" y="-15" width="16" height="15"/><rect x="-8" y="-4" width="16" height="4" fill="#bdbdbd"/><rect x="-5.5" y="2" width="11" height="24"/><path d="M0 6V22" stroke-width="3"/></g></svg>
<div style="left:1336px;top:158.61px;font:normal 17px/17px 'Liberation Sans', sans-serif;color:#a6a6a6;letter-spacing:0.225px;white-space:pre;">Sensitivity</div>
<svg style="left:1370px;top:187px" width="9" height="6.0" viewBox="0 0 9 6.0"><path d="M0.5 0.5L4.5 4.5L8.5 0.5" fill="none" stroke="#a6a6a6" stroke-width="1.3"/></svg>
<svg style="left:1457px;top:106px" width="42" height="42" viewBox="0 0 42 42"><rect x="1.5" y="1.5" width="39" height="39" fill="none" stroke="#d83b01" stroke-width="2"/><rect x="6" y="6" width="13" height="13" fill="none" stroke="#d83b01" stroke-width="2"/><rect x="23" y="6" width="13" height="13" fill="none" stroke="#d83b01" stroke-width="2"/><rect x="6" y="23" width="13" height="13" fill="none" stroke="#d83b01" stroke-width="2"/><rect x="23" y="23" width="13" height="13" fill="none" stroke="#d83b01" stroke-width="2"/></svg>
<div style="left:1446px;top:158.61px;font:normal 17px/17px 'Liberation Sans', sans-serif;color:#333;letter-spacing:0.623px;white-space:pre;">Add-ins</div>
<svg style="left:1580px;top:107px" width="44" height="46" viewBox="0 0 44 46"><path d="M21 36.5H6.5A3.5 3.5 0 0 1 3 33V6A3.5 3.5 0 0 1 6.5 2.5H21L30 11.5V28" fill="none" stroke="#2f6fdf" stroke-width="1.8"/><path d="M15.5 8C13.5 8 14 12 15 15C13.5 20 11 24 8.5 26C6 27.5 7 29 9 27.5C12 25 15 19 17 15.5C18.5 18.5 22 21 24.5 21.5C27 22 27 19.5 24.5 19.5C20.5 19.5 13 21 10 22.5M15.5 8C17.5 8 17 12 16 15" fill="none" stroke="#2f6fdf" stroke-width="1.1"/><g transform="rotate(-45 30 32.5)" fill="none" stroke="#2f6fdf" stroke-width="1.9"><rect x="15.5" y="28.5" width="16" height="8" rx="4"/><rect x="28.5" y="28.5" width="16" height="8" rx="4"/></g></svg>
<div style="left:1552px;top:158.61px;font:normal 17px/17px 'Liberation Sans', sans-serif;color:#333;letter-spacing:-0.275px;white-space:pre;">Create PDF</div>
<div style="left:1540px;top:182.11px;font:normal 17px/17px 'Liberation Sans', sans-serif;color:#333;letter-spacing:0.166px;white-space:pre;">and Share link</div>
<svg style="left:1714px;top:107px" width="44" height="46" viewBox="0 0 44 46"><path d="M19 36.5H6.5A3.5 3.5 0 0 1 3 33V6A3.5 3.5 0 0 1 6.5 2.5H21L30 11.5V25" fill="none" stroke="#2f6fdf" stroke-width="1.8"/><path d="M15.5 8C13.5 8 14 12 15 15C13.5 20 11 24 8.5 26C6 27.5 7 29 9 27.5C12 25 15 19 17 15.5C18.5 18.5 22 21 24.5 21.5C27 22 27 19.5 24.5 19.5C20.5 19.5 13 21 10 22.5M15.5 8C17.5 8 17 12 16 15" fill="none" stroke="#2f6fdf" stroke-width="1.1"/><rect x="18.5" y="27.5" width="20" height="15" rx="2" fill="none" stroke="#2f6fdf" stroke-width="1.8"/><path d="M19 29L28.5 37.5L38 29" fill="none" stroke="#2f6fdf" stroke-width="1.6"/></svg>
<div style="left:1668px;top:158.61px;font:normal 17px/17px 'Liberation Sans', sans-serif;color:#333;letter-spacing:-0.131px;white-space:pre;">Create PDF and</div>
<div style="left:1658px;top:182.11px;font:normal 17px/17px 'Liberation Sans', sans-serif;color:#333;letter-spacing:0.345px;white-space:pre;">Share via Outlook</div>
<svg style="left:1891px;top:223px" width="16" height="10" viewBox="0 0 16 10"><path d="M1 9L8 2L15 9" fill="none" stroke="#333" stroke-width="1.4"/></svg>
<div style="left:0px;top:244px;width:1913px;height:60px;background:#e6e6e6"></div>
<div style="left:7px;top:254px;width:152px;height:35px;background:#fff;border:1px solid #c6c6c6"></div>
<div style="left:14px;top:263.76px;font:normal 18px/18px 'Liberation Sans', sans-serif;color:#333;letter-spacing:0.492px;white-space:pre;">A1</div>
<svg style="left:140px;top:268px" width="10" height="6" viewBox="0 0 10 6"><path d="M0 0H9L4.5 5Z" fill="#666"/></svg>
<div style="left:179px;top:263px;width:3px;height:3px;background:#a0a0a0"></div>
<div style="left:179px;top:269px;width:3px;height:3px;background:#a0a0a0"></div>
<div style="left:179px;top:275px;width:3px;height:3px;background:#a0a0a0"></div>
<div style="left:204px;top:254px;width:164px;height:35px;background:#fdfdfd;border:1px solid #c6c6c6"></div>
<svg style="left:221px;top:263px" width="20" height="17" viewBox="0 0 20 17"><path d="M2.5 15.5L17.5 2M3 2.5L16.5 15" stroke="#c2c2c2" stroke-width="2.2" stroke-linecap="round"/></svg>
<svg style="left:275px;top:263px" width="22" height="17" viewBox="0 0 22 17"><path d="M2.5 9.5L8 15L20 3" fill="none" stroke="#c8c8c8" stroke-width="3" stroke-linecap="round"/></svg>
<div style="left:330px;top:261.22px;font:italic normal 21px/21px 'Liberation Serif', serif;color:#555;letter-spacing:1.922px;white-space:pre;">fx</div>
<div style="left:372px;top:254px;width:1541px;height:35px;background:#fdfdfd;border:1px solid #c6c6c6;border-right:none"></div>
<div style="left:399px;top:263.76px;font:normal 18px/18px 'Liberation Sans', sans-serif;color:#333;letter-spacing:1.186px;white-space:pre;">HOW TO: Add employee account</div>
<svg style="left:1891px;top:268px" width="15" height="9" viewBox="0 0 15 9"><path d="M1.5 1.5L7.5 7L13.5 1.5" fill="none" stroke="#666" stroke-width="2.4"/></svg>
<div style="left:0px;top:304px;width:1890px;height:24px;background:#e6e6e6"></div>
<div style="left:192px;top:305px;width:1px;height:23px;background:#cfcfcf"></div>
<div style="left:351px;top:305px;width:1px;height:23px;background:#cfcfcf"></div>
<div style="left:510px;top:305px;width:1px;height:23px;background:#cfcfcf"></div>
<div style="left:669px;top:305px;width:1px;height:23px;background:#cfcfcf"></div>
<div style="left:828px;top:305px;width:1px;height:23px;background:#cfcfcf"></div>
<div style="left:987px;top:305px;width:1px;height:23px;background:#cfcfcf"></div>
<div style="left:1146px;top:305px;width:1px;height:23px;background:#cfcfcf"></div>
<div style="left:1305px;top:305px;width:1px;height:23px;background:#cfcfcf"></div>
<div style="left:1464px;top:305px;width:1px;height:23px;background:#cfcfcf"></div>
<div style="left:1623px;top:305px;width:1px;height:23px;background:#cfcfcf"></div>
<div style="left:1782px;top:305px;width:1px;height:23px;background:#cfcfcf"></div>
<div style="left:0px;top:327px;width:1890px;height:1px;background:#ababab"></div>
<div style="left:33px;top:304px;width:1px;height:636px;background:#ababab"></div>
<svg style="left:14px;top:309px" width="16" height="16" viewBox="0 0 16 16"><path d="M15 0V15H0Z" fill="#b5b5b5"/></svg>
<div style="left:0px;top:328px;width:33px;height:612px;background:#e6e6e6"></div>
<div style="left:0px;top:352px;width:33px;height:1px;background:#cfcfcf"></div>
<div style="left:0px;top:765px;width:33px;height:1px;background:#cfcfcf"></div>
<div style="left:0px;top:789px;width:33px;height:1px;background:#cfcfcf"></div>
<div style="left:0px;top:813px;width:33px;height:1px;background:#cfcfcf"></div>
<div style="left:0px;top:837px;width:33px;height:1px;background:#cfcfcf"></div>
<div style="left:0px;top:861px;width:33px;height:1px;background:#cfcfcf"></div>
<div style="left:0px;top:887px;width:33px;height:1px;background:#cfcfcf"></div>
<div style="left:0px;top:913px;width:33px;height:1px;background:#cfcfcf"></div>
<div style="left:0px;top:937px;width:33px;height:1px;background:#cfcfcf"></div>
<div style="left:1305px;top:328px;width:1px;height:437px;background:#dadada"></div>
<div style="left:1464px;top:328px;width:1px;height:437px;background:#dadada"></div>
<div style="left:1623px;top:328px;width:1px;height:437px;background:#dadada"></div>
<div style="left:1782px;top:328px;width:1px;height:437px;background:#dadada"></div>
<div style="left:1305px;top:352px;width:584px;height:1px;background:#dadada"></div>
<div style="left:33px;top:765px;width:1856px;height:1px;background:#dadada"></div>
<div style="left:33px;top:789px;width:1856px;height:1px;background:#dadada"></div>
<div style="left:33px;top:813px;width:1856px;height:1px;background:#dadada"></div>
<div style="left:33px;top:837px;width:1856px;height:1px;background:#dadada"></div>
<div style="left:33px;top:861px;width:1856px;height:1px;background:#dadada"></div>
<div style="left:33px;top:887px;width:1856px;height:1px;background:#dadada"></div>
<div style="left:33px;top:913px;width:1856px;height:1px;background:#dadada"></div>
<div style="left:33px;top:937px;width:1856px;height:1px;background:#dadada"></div>
<div style="left:192px;top:765px;width:1px;height:24px;background:#dadada"></div>
<div style="left:351px;top:765px;width:1px;height:24px;background:#dadada"></div>
<div style="left:510px;top:765px;width:1px;height:24px;background:#dadada"></div>
<div style="left:669px;top:765px;width:1px;height:24px;background:#dadada"></div>
<div style="left:828px;top:765px;width:1px;height:24px;background:#dadada"></div>
<div style="left:987px;top:765px;width:1px;height:24px;background:#dadada"></div>
<div style="left:1146px;top:765px;width:1px;height:24px;background:#dadada"></div>
<div style="left:1305px;top:765px;width:1px;height:24px;background:#dadada"></div>
<div style="left:1464px;top:765px;width:1px;height:24px;background:#dadada"></div>
<div style="left:1623px;top:765px;width:1px;height:24px;background:#dadada"></div>
<div style="left:1782px;top:765px;width:1px;height:24px;background:#dadada"></div>
<div style="left:192px;top:813px;width:1px;height:24px;background:#dadada"></div>
<div style="left:351px;top:813px;width:1px;height:24px;background:#dadada"></div>
<div style="left:510px;top:813px;width:1px;height:24px;background:#dadada"></div>
<div style="left:669px;top:813px;width:1px;height:24px;background:#dadada"></div>
<div style="left:828px;top:813px;width:1px;height:24px;background:#dadada"></div>
<div style="left:987px;top:813px;width:1px;height:24px;background:#dadada"></div>
<div style="left:1146px;top:813px;width:1px;height:24px;background:#dadada"></div>
<div style="left:1305px;top:813px;width:1px;height:24px;background:#dadada"></div>
<div style="left:1464px;top:813px;width:1px;height:24px;background:#dadada"></div>
<div style="left:1623px;top:813px;width:1px;height:24px;background:#dadada"></div>
<div style="left:1782px;top:813px;width:1px;height:24px;background:#dadada"></div>
<div style="left:192px;top:913px;width:1px;height:24px;background:#dadada"></div>
<div style="left:351px;top:913px;width:1px;height:24px;background:#dadada"></div>
<div style="left:510px;top:913px;width:1px;height:24px;background:#dadada"></div>
<div style="left:669px;top:913px;width:1px;height:24px;background:#dadada"></div>
<div style="left:828px;top:913px;width:1px;height:24px;background:#dadada"></div>
<div style="left:987px;top:913px;width:1px;height:24px;background:#dadada"></div>
<div style="left:1146px;top:913px;width:1px;height:24px;background:#dadada"></div>
<div style="left:1305px;top:913px;width:1px;height:24px;background:#dadada"></div>
<div style="left:1464px;top:913px;width:1px;height:24px;background:#dadada"></div>
<div style="left:1623px;top:913px;width:1px;height:24px;background:#dadada"></div>
<div style="left:1782px;top:913px;width:1px;height:24px;background:#dadada"></div>
<div style="left:1305px;top:789px;width:1px;height:24px;background:#dadada"></div>
<div style="left:1464px;top:789px;width:1px;height:24px;background:#dadada"></div>
<div style="left:1623px;top:789px;width:1px;height:24px;background:#dadada"></div>
<div style="left:1782px;top:789px;width:1px;height:24px;background:#dadada"></div>
<div style="left:1889px;top:328px;width:1px;height:612px;background:#b0b0b0"></div>
<div style="left:11.5px;top:332.53px;font:normal 16.5px/16.5px 'Liberation Sans', sans-serif;color:#222;letter-spacing:0.323px;white-space:pre;">1</div>
<div style="left:11.5px;top:745.53px;font:normal 16.5px/16.5px 'Liberation Sans', sans-serif;color:#222;letter-spacing:0.323px;white-space:pre;">2</div>
<div style="left:11.5px;top:769.53px;font:normal 16.5px/16.5px 'Liberation Sans', sans-serif;color:#222;letter-spacing:0.323px;white-space:pre;">3</div>
<div style="left:11.5px;top:793.53px;font:normal 16.5px/16.5px 'Liberation Sans', sans-serif;color:#222;letter-spacing:0.323px;white-space:pre;">4</div>
<div style="left:11.5px;top:817.53px;font:normal 16.5px/16.5px 'Liberation Sans', sans-serif;color:#222;letter-spacing:0.323px;white-space:pre;">5</div>
<div style="left:11.5px;top:841.53px;font:normal 16.5px/16.5px 'Liberation Sans', sans-serif;color:#222;letter-spacing:0.323px;white-space:pre;">6</div>
<div style="left:11.5px;top:867.53px;font:normal 16.5px/16.5px 'Liberation Sans', sans-serif;color:#222;letter-spacing:0.323px;white-space:pre;">7</div>
<div style="left:11.5px;top:893.53px;font:normal 16.5px/16.5px 'Liberation Sans', sans-serif;color:#222;letter-spacing:0.323px;white-space:pre;">8</div>
<div style="left:11.5px;top:917.53px;font:normal 16.5px/16.5px 'Liberation Sans', sans-serif;color:#222;letter-spacing:0.323px;white-space:pre;">9</div>
<div style="left:106.5px;top:309.46px;font:normal 16px/16px 'Liberation Sans', sans-serif;color:#222;letter-spacing:1.328px;white-space:pre;width:12px;text-align:center;letter-spacing:0">A</div>
<div style="left:265.5px;top:309.46px;font:normal 16px/16px 'Liberation Sans', sans-serif;color:#222;letter-spacing:1.328px;white-space:pre;width:12px;text-align:center;letter-spacing:0">B</div>
<div style="left:424.5px;top:309.46px;font:normal 16px/16px 'Liberation Sans', sans-serif;color:#222;letter-spacing:0.445px;white-space:pre;width:12px;text-align:center;letter-spacing:0">C</div>
<div style="left:583.5px;top:309.46px;font:normal 16px/16px 'Liberation Sans', sans-serif;color:#222;letter-spacing:0.445px;white-space:pre;width:12px;text-align:center;letter-spacing:0">D</div>
<div style="left:742.5px;top:309.46px;font:normal 16px/16px 'Liberation Sans', sans-serif;color:#222;letter-spacing:1.328px;white-space:pre;width:12px;text-align:center;letter-spacing:0">E</div>
<div style="left:901.5px;top:309.46px;font:normal 16px/16px 'Liberation Sans', sans-serif;color:#222;letter-spacing:2.227px;white-space:pre;width:12px;text-align:center;letter-spacing:0">F</div>
<div style="left:1060.5px;top:309.46px;font:normal 16px/16px 'Liberation Sans', sans-serif;color:#222;letter-spacing:-0.445px;white-space:pre;width:12px;text-align:center;letter-spacing:0">G</div>
<div style="left:1219.5px;top:309.46px;font:normal 16px/16px 'Liberation Sans', sans-serif;color:#222;letter-spacing:0.445px;white-space:pre;width:12px;text-align:center;letter-spacing:0">H</div>
<div style="left:1378.5px;top:309.46px;font:normal 16px/16px 'Liberation Sans', sans-serif;color:#222;letter-spacing:7.555px;white-space:pre;width:12px;text-align:center;letter-spacing:0">I</div>
<div style="left:1537.5px;top:309.46px;font:normal 16px/16px 'Liberation Sans', sans-serif;color:#222;letter-spacing:4.000px;white-space:pre;width:12px;text-align:center;letter-spacing:0">J</div>
<div style="left:1696.5px;top:309.46px;font:normal 16px/16px 'Liberation Sans', sans-serif;color:#222;letter-spacing:1.328px;white-space:pre;width:12px;text-align:center;letter-spacing:0">K</div>
<div style="left:1856px;top:309.46px;font:normal 16px/16px 'Liberation Sans', sans-serif;color:#222;letter-spacing:3.102px;white-space:pre;width:12px;text-align:center;letter-spacing:0">L</div>
<div style="left:47px;top:331.61px;font:bold 17px/17px 'Liberation Sans', sans-serif;color:#000;letter-spacing:0.355px;white-space:pre;">HOW TO: Add employee account</div>
<div style="left:42.5px;top:382.76px;font:normal 18px/18px 'Liberation Sans', sans-serif;color:#000;letter-spacing:0.450px;white-space:pre;">For each employee account , define the employee account as below.  The information in red is mandatory.</div>
<div style="left:42.5px;top:434.76px;font:normal 18px/18px 'Liberation Sans', sans-serif;color:#000;letter-spacing:0.403px;white-space:pre;">[1] First, go to the &quot;employee accounts&quot; sheet</div>
<div style="left:42.5px;top:460.76px;font:normal 18px/18px 'Liberation Sans', sans-serif;color:#000;letter-spacing:0.274px;white-space:pre;">[2] Enter Username</div>
<div style="left:42.5px;top:486.76px;font:normal 18px/18px 'Liberation Sans', sans-serif;color:#000;letter-spacing:0.468px;white-space:pre;">[3] Enter Telephone</div>
<div style="left:42.5px;top:512.76px;font:normal 18px/18px 'Liberation Sans', sans-serif;color:#000;letter-spacing:0.264px;white-space:pre;">[4] Enter Email</div>
<div style="left:42.5px;top:538.76px;font:normal 18px/18px 'Liberation Sans', sans-serif;color:#000;letter-spacing:0.163px;white-space:pre;">[5] Enter Password</div>
<div style="left:42.5px;top:564.76px;font:normal 18px/18px 'Liberation Sans', sans-serif;color:#000;letter-spacing:0.260px;white-space:pre;">[6] Enter Full Name</div>
<div style="left:42.5px;top:590.76px;font:normal 18px/18px 'Liberation Sans', sans-serif;color:#000;letter-spacing:0.496px;white-space:pre;">[7] Enter Department</div>
<div style="left:42.5px;top:616.76px;font:normal 18px/18px 'Liberation Sans', sans-serif;color:#000;letter-spacing:0.357px;white-space:pre;">[8] Enter Position</div>
<div style="left:42.5px;top:642.76px;font:normal 18px/18px 'Liberation Sans', sans-serif;color:#000;letter-spacing:0.378px;white-space:pre;">[8] Enter Description</div>
<div style="left:42.5px;top:668.76px;font:normal 18px/18px 'Liberation Sans', sans-serif;color:#000;letter-spacing:0.066px;white-space:pre;">[9] Enter Access Role Profile</div>
<div style="left:42.5px;top:694.76px;font:normal 18px/18px 'Liberation Sans', sans-serif;color:#000;letter-spacing:0.263px;white-space:pre;">[10] Enter Unified Policy List</div>
<div style="left:42.5px;top:720.76px;font:normal 18px/18px 'Liberation Sans', sans-serif;color:#000;letter-spacing:0.383px;white-space:pre;">[11] Enter Other Attributes [Acct-Interim-Interval, Session-Timeout, Tunnel-Private-Group-ID, WISPr-Bandwidth-Max-Down, WISPr-Bandwidth-Max-Up]</div>
<div style="left:42.5px;top:746.76px;font:normal 18px/18px 'Liberation Sans', sans-serif;color:#000;letter-spacing:0.519px;white-space:pre;">[12] Upload the file into the OmniVista Cirrus application.</div>
<div style="left:37px;top:792.76px;font:bold 18px/18px 'Liberation Sans', sans-serif;color:#7030a0;letter-spacing:-0.087px;white-space:pre;">Here is an example of a valid table:</div>
<div style="left:34px;top:838px;width:1748px;height:23px;background:#d9d9d9"></div>
<div style="left:33px;top:837px;width:1750px;height:1px;background:#000"></div>
<div style="left:33px;top:861px;width:1750px;height:1px;background:#000"></div>
<div style="left:33px;top:887px;width:1750px;height:1px;background:#000"></div>
<div style="left:33px;top:913px;width:1750px;height:1px;background:#000"></div>
<div style="left:192px;top:837px;width:1px;height:77px;background:#000"></div>
<div style="left:351px;top:837px;width:1px;height:77px;background:#000"></div>
<div style="left:510px;top:837px;width:1px;height:77px;background:#000"></div>
<div style="left:669px;top:837px;width:1px;height:77px;background:#000"></div>
<div style="left:828px;top:837px;width:1px;height:77px;background:#000"></div>
<div style="left:987px;top:837px;width:1px;height:77px;background:#000"></div>
<div style="left:1146px;top:837px;width:1px;height:77px;background:#000"></div>
<div style="left:1305px;top:837px;width:1px;height:77px;background:#000"></div>
<div style="left:1464px;top:837px;width:1px;height:77px;background:#000"></div>
<div style="left:1623px;top:837px;width:1px;height:77px;background:#000"></div>
<div style="left:1782px;top:837px;width:1px;height:25px;background:#000"></div>
<div style="left:75.7px;top:842.88px;font:bold 15.5px/15.5px 'Liberation Sans', sans-serif;color:#ff0000;letter-spacing:0.105px;white-space:pre;">Username</div>
<div style="left:232px;top:842.88px;font:bold 15.5px/15.5px 'Liberation Sans', sans-serif;color:#000;letter-spacing:0.383px;white-space:pre;">Telephone</div>
<div style="left:411.6px;top:842.88px;font:bold 15.5px/15.5px 'Liberation Sans', sans-serif;color:#000;letter-spacing:-0.271px;white-space:pre;">Email</div>
<div style="left:554.4px;top:842.88px;font:bold 15.5px/15.5px 'Liberation Sans', sans-serif;color:#ff0000;letter-spacing:-0.265px;white-space:pre;">Password</div>
<div style="left:712.2px;top:842.88px;font:bold 15.5px/15.5px 'Liberation Sans', sans-serif;color:#000;letter-spacing:0.048px;white-space:pre;">Full Name</div>
<div style="left:863.3px;top:842.88px;font:bold 15.5px/15.5px 'Liberation Sans', sans-serif;color:#000;letter-spacing:0.457px;white-space:pre;">Department</div>
<div style="left:1037.4px;top:842.88px;font:bold 15.5px/15.5px 'Liberation Sans', sans-serif;color:#000;letter-spacing:-0.130px;white-space:pre;">Position</div>
<div style="left:1184.3px;top:842.88px;font:bold 15.5px/15.5px 'Liberation Sans', sans-serif;color:#000;letter-spacing:-0.106px;white-space:pre;">Description</div>
<div style="left:1315px;top:842.88px;font:bold 15.5px/15.5px 'Liberation Sans', sans-serif;color:#000;letter-spacing:-0.286px;white-space:pre;">Access Role Profile</div>
<div style="left:1478.6px;top:842.88px;font:bold 15.5px/15.5px 'Liberation Sans', sans-serif;color:#000;letter-spacing:-0.103px;white-space:pre;">Unified Policy List</div>
<div style="left:1642.5px;top:842.88px;font:bold 15.5px/15.5px 'Liberation Sans', sans-serif;color:#000;letter-spacing:0.141px;white-space:pre;">Other Attributes</div>
<div style="left:71.8px;top:867.76px;font:normal 18px/18px 'Liberation Sans', sans-serif;color:#000;letter-spacing:-0.058px;white-space:pre;">John_Doe</div>
<div style="left:210.3px;top:867.76px;font:normal 18px/18px 'Liberation Sans', sans-serif;color:#000;letter-spacing:-0.110px;white-space:pre;">+33 155667000</div>
<div style="left:550.4px;top:867.76px;font:normal 18px/18px 'Liberation Sans', sans-serif;color:#000;letter-spacing:-0.136px;white-space:pre;">12345678</div>
<div style="left:714.8px;top:869.46px;font:normal 16px/16px 'Liberation Sans', sans-serif;color:#000;letter-spacing:-0.062px;white-space:pre;">John Doe</div>
<div style="left:892.8px;top:867.76px;font:normal 18px/18px 'Liberation Sans', sans-serif;color:#000;letter-spacing:-1.574px;white-space:pre;">ALE</div>
<div style="left:1031.4px;top:867.76px;font:normal 18px/18px 'Liberation Sans', sans-serif;color:#000;letter-spacing:0.043px;white-space:pre;">Engineer</div>
<div style="left:1150.3px;top:869.46px;font:normal 16px/16px 'Liberation Sans', sans-serif;color:#000;letter-spacing:0.035px;white-space:pre;">Account&#x27;s John</div>
<div style="left:1362px;top:869.46px;font:normal 16px/16px 'Liberation Sans', sans-serif;color:#000;letter-spacing:-0.879px;white-space:pre;">ARP_1</div>
<div style="left:1514.2px;top:869.46px;font:normal 16px/16px 'Liberation Sans', sans-serif;color:#000;letter-spacing:0.003px;white-space:pre;">Policy_1</div>
<div style="left:73px;top:893.76px;font:normal 18px/18px 'Liberation Sans', sans-serif;color:#000;letter-spacing:-0.345px;white-space:pre;">Jane_Doe</div>
<div style="left:210.3px;top:893.76px;font:normal 18px/18px 'Liberation Sans', sans-serif;color:#000;letter-spacing:-0.110px;white-space:pre;">+1 5417543010</div>
<div style="left:550.4px;top:893.76px;font:normal 18px/18px 'Liberation Sans', sans-serif;color:#000;letter-spacing:-0.136px;white-space:pre;">12345678</div>
<div style="left:716px;top:895.46px;font:normal 16px/16px 'Liberation Sans', sans-serif;color:#000;letter-spacing:-0.212px;white-space:pre;">Jane Doe</div>
<div style="left:892.8px;top:893.76px;font:normal 18px/18px 'Liberation Sans', sans-serif;color:#000;letter-spacing:-1.574px;white-space:pre;">ALE</div>
<div style="left:1031.4px;top:893.76px;font:normal 18px/18px 'Liberation Sans', sans-serif;color:#000;letter-spacing:0.043px;white-space:pre;">Engineer</div>
<div style="left:1150.3px;top:895.46px;font:normal 16px/16px 'Liberation Sans', sans-serif;color:#000;letter-spacing:-0.065px;white-space:pre;">Account&#x27;s Jane</div>
<div style="left:1362px;top:895.46px;font:normal 16px/16px 'Liberation Sans', sans-serif;color:#000;letter-spacing:-0.879px;white-space:pre;">ARP_2</div>
<div style="left:1514.2px;top:895.46px;font:normal 16px/16px 'Liberation Sans', sans-serif;color:#000;letter-spacing:0.003px;white-space:pre;">Policy_2</div>
<div style="left:361.4px;top:868.61px;font:normal 17px/17px 'Liberation Sans', sans-serif;color:#0563c1;letter-spacing:-0.182px;white-space:pre;text-decoration:underline">john.doe@ale.com</div>
<div style="left:362px;top:894.61px;font:normal 17px/17px 'Liberation Sans', sans-serif;color:#0563c1;letter-spacing:-0.219px;white-space:pre;text-decoration:underline">jane.doe@ale.com</div>
<svg style="left:511px;top:862px" width="8" height="8" viewBox="0 0 8 8"><path d="M0 0H7.5L0 7.5Z" fill="#107c10"/></svg>
<svg style="left:511px;top:888px" width="8" height="8" viewBox="0 0 8 8"><path d="M0 0H7.5L0 7.5Z" fill="#107c10"/></svg>
<div style="left:1783px;top:862px;width:106px;height:25px;background:#fff"></div>
<div style="left:1783px;top:888px;width:106px;height:25px;background:#fff"></div>
<div style="left:1624px;top:864.46px;width:265px;height:24px;overflow:hidden"><div style="left:1624px;top:868.46px;font:normal 16px/16px 'Liberation Sans', sans-serif;color:#000;letter-spacing:0.356px;white-space:pre;;left:0px;top:4px">alue&quot;:&quot;66&quot;},{&quot;key&quot;:&quot;Session-Timeout&quot;</div></div>
<div style="left:1624px;top:890.46px;width:265px;height:24px;overflow:hidden"><div style="left:1619px;top:894.46px;font:normal 16px/16px 'Liberation Sans', sans-serif;color:#000;letter-spacing:0.478px;white-space:pre;;left:-5px;top:4px">ssion-Timeout&quot;,&quot;value&quot;:&quot;12000&quot;}]</div></div>
<div style="left:0px;top:940px;width:1913px;height:34px;background:#e6e6e6;border-top:1px solid #a0a0a0"></div>
<svg style="left:28px;top:950px" width="8" height="12" viewBox="0 0 8 12"><path d="M7 0.5L0.5 6L7 11.5Z" fill="#c8c8c8"/></svg>
<svg style="left:63px;top:950px" width="8" height="12" viewBox="0 0 8 12"><path d="M0.5 0.5L7 6L0.5 11.5Z" fill="#c8c8c8"/></svg>
<div style="left:118px;top:944px;width:1px;height:26px;background:#a0a0a0"></div>
<div style="left:137px;top:946.92px;font:normal 19px/19px 'Liberation Sans', sans-serif;color:#444;letter-spacing:0.252px;white-space:pre;">employee accounts</div>
<div style="left:324px;top:940px;width:65px;height:31px;background:#fff;border-left:1px solid #a0a0a0;border-right:1px solid #a0a0a0"></div>
<div style="left:324px;top:968px;width:65px;height:2.5px;background:#217346"></div>
<div style="left:336px;top:946.92px;font:bold 19px/19px 'Liberation Sans', sans-serif;color:#217346;letter-spacing:0.486px;white-space:pre;">help</div>
<svg style="left:427px;top:946px" width="23" height="23" viewBox="0 0 23 23"><circle cx="11.5" cy="11.5" r="10.5" fill="none" stroke="#666" stroke-width="1.2"/><path d="M6 11.5H17M11.5 6V17" stroke="#666" stroke-width="1.6"/></svg>
<div style="left:1148px;top:949px;width:3px;height:3px;background:#a8a8a8"></div>
<div style="left:1148px;top:955px;width:3px;height:3px;background:#a8a8a8"></div>
<div style="left:1148px;top:961px;width:3px;height:3px;background:#a8a8a8"></div>
<div style="left:1168px;top:944px;width:722px;height:25px;background:#fff;border:1px solid #a0a0a0"></div>
<div style="left:1193px;top:944px;width:1px;height:25px;background:#a0a0a0"></div>
<div style="left:1844px;top:944px;width:1px;height:25px;background:#a0a0a0"></div>
<div style="left:1845px;top:945px;width:21px;height:23px;background:#e6e6e6"></div>
<div style="left:1866px;top:944px;width:1px;height:25px;background:#a0a0a0"></div>
<svg style="left:1177px;top:951px" width="8" height="12" viewBox="0 0 8 12"><path d="M7 0V11L0 5.5Z" fill="#222"/></svg>
<svg style="left:1875px;top:951px" width="8" height="12" viewBox="0 0 8 12"><path d="M0 0V11L7 5.5Z" fill="#222"/></svg>
<div style="left:1890px;top:304px;width:23px;height:636px;background:#e6e6e6"></div>
<div style="left:1892px;top:305px;width:21px;height:25px;background:#fff;border:1px solid #a0a0a0;border-right:none"></div>
<div style="left:1892px;top:330px;width:21px;height:395px;background:#fff;border:1px solid #a0a0a0;border-right:none"></div>
<div style="left:1892px;top:918px;width:21px;height:23px;background:#fff;border:1px solid #a0a0a0;border-right:none"></div>
<svg style="left:1898px;top:313px" width="13" height="8" viewBox="0 0 13 8"><path d="M0 7H12L6 0Z" fill="#222"/></svg>
<svg style="left:1898px;top:926px" width="13" height="8" viewBox="0 0 13 8"><path d="M0 0H12L6 7Z" fill="#222"/></svg></body></html>
